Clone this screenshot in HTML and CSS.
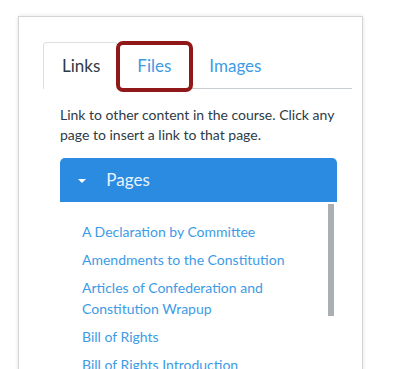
FILE: index.html
```html
<!DOCTYPE html>
<html lang="en">
<head>
    <meta charset="UTF-8">
    <title>Links</title>
    <link rel="stylesheet" href="styles.css">
</head>
<body>
    <div class="panel">
        <div class="tabs">
            <div class="tab active">Links</div>
            <div class="tab highlighted">Files<span class="callout"></span></div>
            <div class="tab">Images</div>
        </div>

        <div class="content">
            <p class="intro">Link to other content in the course. Click any page to insert a link to that page.</p>

            <div class="group">
                <div class="group-header">
                    <span class="caret"></span>
                    Pages
                </div>
                <div class="group-body">
                    <ul class="page-list">
                        <li><a href="#">A Declaration by Committee</a></li>
                        <li><a href="#">Amendments to the Constitution</a></li>
                        <li><a href="#">Articles of Confederation and Constitution Wrapup</a></li>
                        <li><a href="#">Bill of Rights</a></li>
                        <li><a href="#">Bill of Rights Introduction</a></li>
                    </ul>
                    <div class="scrollbar"><div class="thumb"></div></div>
                </div>
            </div>
        </div>
    </div>
</body>
</html>
```

FILE: styles.css
```css
body {
    margin: 0;
    background-color: #ffffff;
    font-family: Lato, "Liberation Sans", sans-serif;
    color: #2d3b45;
    overflow: hidden;
}
.panel {
    margin: 16px 0 0 18px;
    width: 345px;
    height: 420px;
    padding: 25px 0 0 24px;
    box-sizing: border-box;
    border: 1px solid #d4d4d4;
    border-bottom: none;
    box-shadow: 0 0 4px rgba(0,0,0,0.12);
    background-color: #ffffff;
}
.tabs {
    display: flex;
    width: 309px;
    border-bottom: 1px solid #c7cdd1;
}
.tab {
    position: relative;
    height: 46px;
    line-height: 46px;
    padding: 0 18px;
    font-size: 17px;
    color: #3d9be6;
    margin-bottom: -1px;
    border: 1px solid transparent;
    border-bottom: none;
}
.tab.active {
    color: #2d3b45;
    border-color: #dcdfe2;
    border-radius: 4px 4px 0 0;
    background-color: #ffffff;
    padding: 0 17px 0 18px;
}
/* red outline drawn over the Files tab */
.callout {
    position: absolute;
    top: -2px;
    left: -3px;
    right: -4px;
    bottom: -3px;
    border: 4px solid #911818;
    border-radius: 7px;
}
.content {
    padding: 0 0 0 17px;
}
.intro {
    margin: 16px 0 13px;
    width: 285px;
    font-size: 14px;
    line-height: 20px;
    color: #2d3b45;
}
.group {
    width: 277px;
}
.group-header {
    height: 44px;
    line-height: 44px;
    background-color: #2b8be0;
    border-radius: 5px 5px 0 0;
    color: #e9f3fc;
    font-size: 17px;
    padding-left: 18px;
}
.caret {
    display: inline-block;
    width: 0;
    height: 0;
    border-left: 4px solid transparent;
    border-right: 4px solid transparent;
    border-top: 4px solid #ffffff;
    vertical-align: middle;
    margin-right: 16px;
    position: relative;
    top: -1px;
}
.group-body {
    display: flex;
}
.page-list {
    flex: 1;
    list-style: none;
    margin: 0;
    padding: 19px 0 0 22px;
}
.page-list li {
    font-size: 14px;
    line-height: 21px;
    margin-bottom: 7px;
    padding-right: 40px;
}
.page-list a {
    color: #3d9be6;
    text-decoration: none;
}
.scrollbar {
    width: 9px;
    padding-top: 2px;
}
.thumb {
    width: 6px;
    height: 112px;
    background-color: #a9afb3;
}
```
